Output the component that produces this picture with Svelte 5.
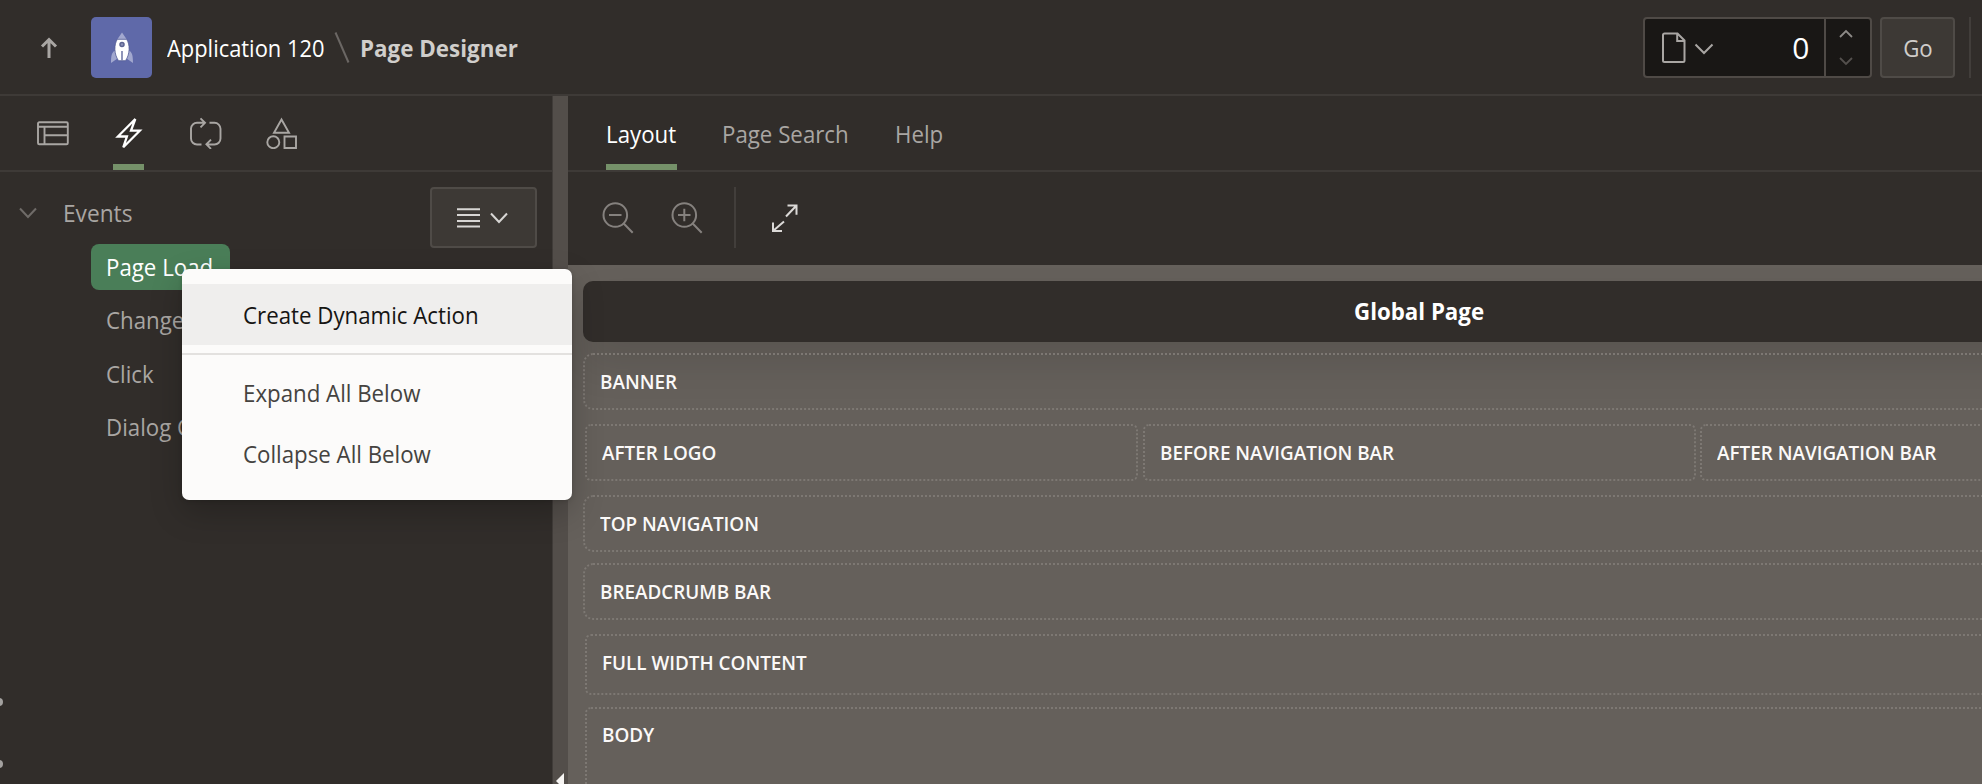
<script>
  const events = [
    { label: 'Page Load', selected: true },
    { label: 'Change' },
    { label: 'Click' },
    { label: 'Dialog Closed' }
  ];
  const tabs = [
    { label: 'Layout', active: true, w: 71 },
    { label: 'Page Search', w: 128 },
    { label: 'Help', w: 49 }
  ];
  const menu = [
    { label: 'Create Dynamic Action', hover: true, divider: true },
    { label: 'Expand All Below' },
    { label: 'Collapse All Below' }
  ];
</script>

<div class="app">
  <header class="top">
    <svg class="up" width="20" height="24" viewBox="0 0 20 24"><path d="M10 22V4M3 10.5 10 3.5l7 7" /></svg>
    <div class="tile">
      <svg width="24" height="32" viewBox="0 0 24 32">
        <path class="pale" d="M12 .5 7.2 7.5h9.6zM4.8 18.5C2 20.5 1 23 1 31l6.5-4.5zM19.2 18.5C22 20.5 23 23 23 31l-6.5-4.5z" />
        <path class="hull" d="M7.3 7.3h9.4C20 12.5 20.2 22 15.5 28.7h-7C3.8 22 4 12.5 7.3 7.3z" />
        <circle class="port" cx="12" cy="12.5" r="2" />
        <path class="slit" d="M12 19v10" />
      </svg>
    </div>
    <span class="crumb t">Application 120</span>
    <svg class="slash" width="17" height="34" viewBox="0 0 17 34"><path d="M1.5 1.5 14.5 31.5" /></svg>
    <span class="crumb current t">Page Designer</span>
    <div class="pagebox">
      <button class="kind" aria-label="Page">
        <svg width="24" height="32" viewBox="0 0 24 32"><path d="M2.5 1.5H15.5L22.5 8.5V28.5a1.5 1.5 0 0 1-1.5 1.5H2.5A1.5 1.5 0 0 1 1 28.5V3A1.5 1.5 0 0 1 2.5 1.5zM15.2 1.5V9h7.3" /></svg>
        <svg class="chev" width="20" height="12" viewBox="0 0 20 12"><path d="M1.5 1.5 10 10l8.5-8.5" /></svg>
      </button>
      <span class="num t">0</span>
      <div class="spin">
        <svg width="14" height="9" viewBox="0 0 14 9"><path d="M1 8 7 2l6 6" /></svg>
        <svg class="dim" width="14" height="9" viewBox="0 0 14 9"><path d="M1 1l6 6 6-6" /></svg>
      </div>
    </div>
    <button class="go"><span class="t">Go</span></button>
    <i class="rule"></i>
  </header>

  <div class="main">
    <aside class="left">
      <nav class="icons">
        <span class="itab"><svg viewBox="0 0 32 32"><path d="M2.3 5.2H29.5a1.3 1.3 0 0 1 1.3 1.3V26a1.3 1.3 0 0 1-1.3 1.3H2.3A1.3 1.3 0 0 1 1 26V6.500A1.3 1.3 0 0 1 2.3 5.2zM1 9.7H30.8M7.5 9.7V27.3M7.5 18.2H30.8" /></svg></span>
        <span class="itab on"><svg viewBox="0 0 32 32"><path d="M22.3 2 4.9 19.5h9L10.3 30.3 26.800 13.700H18z" /></svg></span>
        <span class="itab"><svg viewBox="0 0 32 32"><path d="M15 5.8H7A6 6 0 0 0 1 11.500V21.500a6 6 0 0 0 6 6h4.500M10.500 1.300 15 5.800 10.500 10.300M19.500 5.800H24.500a6 6 0 0 1 6 6V21.500a6 6 0 0 1-6 6H16.500M21 22.700l-4.600 4.600 4.600 4.600" /></svg></span>
        <span class="itab"><svg viewBox="0 0 32 32"><path d="M15.500 2.500 8 15.700H23zM18.500 19.500H30V31H18.500z" /><circle cx="7.300" cy="25.200" r="6" /></svg></span>
      </nav>
      <div class="tree">
        <div class="node root">
          <svg class="twist" width="20" height="12" viewBox="0 0 20 12"><path d="M2 1.5 10 10l8-8.5" /></svg>
          <span class="t">Events</span>
        </div>
        {#each events as e}
          <div class="node"><span class="pill" class:selected={e.selected}><span class="t">{e.label}</span></span></div>
        {/each}
        <button class="listbtn" aria-label="Menu">
          <svg width="24" height="20" viewBox="0 0 24 20"><path d="M0 1.3H23M0 7H23M0 12.9H23M0 18.6H23" /></svg>
          <svg width="20" height="12" viewBox="0 0 20 12"><path d="M2 1.5 10 10l8-8.5" /></svg>
        </button>
      </div>
      <i class="dot a"></i>
      <i class="dot b"></i>
    </aside>

    <div class="split"><svg width="8" height="16" viewBox="0 0 8 16"><path d="M8 0V16L0 8z" /></svg></div>

    <section class="right">
      <nav class="tabs">
        {#each tabs as t}
          <span class="tab" class:active={t.active} style="width:{t.w}px"><span class="t">{t.label}</span></span>
        {/each}
      </nav>
      <div class="tools">
        <svg class="zoom" width="32" height="32" viewBox="0 0 32 32"><circle cx="13.3" cy="13" r="11.8" /><path d="M21.7 21.5 30.7 30.7M7 13H19.5" /></svg>
        <svg class="zoom" width="32" height="32" viewBox="0 0 32 32"><circle cx="13.3" cy="13" r="11.8" /><path d="M21.7 21.5 30.7 30.7M7 13H19.5M13.3 6.7V19.3" /></svg>
        <i class="rule"></i>
        <svg class="expand" width="28" height="28" viewBox="0 0 28 28"><path d="M15 12.5 25.5 1.5M16.500 1.5H25.5V10.7M13 17.5 2 27M2 18.5V27h9" /></svg>
      </div>
      <div class="canvas">
        <div class="stage">
          <div class="title"><span class="t">Global Page</span></div>
          <div class="region"><b class="t">BANNER</b></div>
          <div class="trio">
            <div class="region in"><b class="t">AFTER LOGO</b></div>
            <div class="region in"><b class="t">BEFORE NAVIGATION BAR</b></div>
            <div class="region in"><b class="t">AFTER NAVIGATION BAR</b></div>
          </div>
          <div class="region nav"><b class="t">TOP NAVIGATION</b></div>
          <div class="region bread"><b class="t">BREADCRUMB BAR</b></div>
          <div class="region in full"><b class="t">FULL WIDTH CONTENT</b></div>
          <div class="region in body"><b class="t">BODY</b></div>
        </div>
      </div>
    </section>
  </div>

  <div class="menu">
    {#each menu as m}
      <div class="item" class:hover={m.hover}><span class="t">{m.label}</span></div>
      {#if m.divider}<hr />{/if}
    {/each}
  </div>
</div>

<style>
  :global(body) { background: #312d2a; overflow: hidden; }
  .app {
    position: relative; width: 1982px; height: 784px; overflow: hidden; box-sizing: border-box;
    display: flex; flex-direction: column;
    font-family: 'Open Sans', 'Noto Sans', sans-serif; font-size: 24px; font-weight: 450; line-height: 32px;
    color: #a9a6a3; background: #312d2a; white-space: nowrap;
  }
  .app :global(*) { box-sizing: border-box; }
  .t { display: inline-block; transform: scaleX(.928); transform-origin: 0 50%; }
  svg { display: block; flex: none; fill: none; stroke: currentColor; stroke-width: 2; }
  button { font: inherit; color: inherit; margin: 0; padding: 0; }

  .top { height: 96px; flex: none; display: flex; align-items: center; padding: 1px 0 0 39px; border-bottom: 2px solid #3e3a37; }
  .up { stroke-width: 3; }
  .tile { width: 61px; height: 61px; margin-left: 32px; border-radius: 5px; background: #5f69a9; display: flex; align-items: center; justify-content: center; }
  .tile svg { stroke: none; }
  .pale { fill: #a2a8cf; }
  .hull { fill: #fff; stroke: #535c94; stroke-width: .8; }
  .port { fill: #8c92b8; stroke: #5c6391; stroke-width: 1.5; }
  .slit { stroke: #7c83ad; stroke-width: 1.7; }
  .crumb { color: #fff; width: 158px; margin-left: 15px; transform: scaleX(.912); }
  .slash { margin-left: 9px; color: #6b6764; }
  .current { color: #d0cecb; font-weight: 700; margin-left: 9px; width: 170px; transform: scaleX(.933); }
  .pagebox { margin-left: auto; width: 229px; height: 61px; border: 2px solid #4f4a46; border-radius: 4px; background: #191715; display: flex; align-items: center; }
  .kind { background: none; border: 0; display: flex; align-items: center; padding-left: 17px; }
  .chev { margin: 2px 0 0 8px; }
  .num { margin-left: auto; margin-right: 15px; font-size: 28.5px; color: #fff; transform-origin: 100% 50%; transform: scaleX(1.05); }
  .spin { width: 46px; height: 100%; border-left: 2px solid #4f4a46; display: flex; flex-direction: column; align-items: center; justify-content: space-between; padding: 10px 5px 10px 0; }
  .spin svg { stroke-width: 1.8; color: #8d8a87; }
  .spin .dim { color: #54504d; }
  .go { margin-left: 8px; width: 75px; height: 61px; border: 2px solid #4f4b47; border-radius: 4px; background: #3d3935; color: #d0cdca; }
  .go .t { transform-origin: 50% 50%; }
  .rule { width: 2px; height: 61px; background: #423e3b; flex: none; }
  .top > .rule { margin: 0 11px 0 14px; }

  .main { flex: 1; display: flex; min-height: 0; }
  .left { width: 552px; flex: none; position: relative; overflow: hidden; }
  .icons { height: 76px; padding-left: 32px; display: flex; gap: 36px; border-bottom: 2px solid #3e3a37; }
  .itab { width: 41px; margin-right: -1px; height: 74px; position: relative; display: flex; justify-content: flex-end; padding: 21px 4px 0 0; }
  .itab:nth-child(n + 3) { padding-right: 3px; }
  .itab svg { width: 32px; height: 32px; stroke-width: 1.9; }
  .itab.on { color: #fff; }
  .itab.on svg { stroke-width: 2.3; }
  .itab.on::after { content: ''; position: absolute; left: 5px; right: 5px; bottom: 0; height: 6px; background: #759169; }
  .tree { position: relative; padding-top: 14.7px; }
  .node { height: 53.4px; display: flex; align-items: center; padding-left: 91px; }
  .root { padding-left: 18px; }
  .twist { color: #6f6b68; }
  .root .t { margin-left: 25px; transform: scaleX(.945); }
  .pill { height: 46px; padding: 0 15px 0 14.5px; border-radius: 8px; display: flex; align-items: center; }
  .selected { background: #4a7e58; color: #fff; width: 139px; }
  .listbtn { position: absolute; left: 430px; top: 15px; width: 107px; height: 61px; border: 2px solid #4f4b47; border-radius: 4px; background: #3d3935; color: #d8d6d4; display: flex; align-items: center; padding-left: 25px; gap: 8px; }
  .dot { position: absolute; left: -5px; width: 8px; height: 8px; border-radius: 50%; background: #a3a19f; }
  .a { top: 602px; }
  .b { top: 664px; }

  .split { width: 16px; flex: none; background: #534e4a; border-left: 1px solid #403c39; overflow: hidden; display: flex; flex-direction: column; padding: 677px 0 0 3px; }
  .split svg { fill: #f7f5f3; stroke: none; }

  .right { flex: 1; min-width: 0; display: flex; flex-direction: column; }
  .tabs { height: 76px; flex: none; padding-left: 38px; display: flex; gap: 45px; border-bottom: 2px solid #3e3a37; }
  .tab { position: relative; height: 74px; display: flex; align-items: center; padding-top: 1px; }
  .active { color: #fff; }
  .active::after { content: ''; position: absolute; left: 0; right: 0; bottom: 0; height: 6px; background: #759169; }
  .tools { height: 93px; flex: none; display: flex; align-items: flex-start; padding: 15px 0 0 34px; }
  .zoom { color: #85817e; margin: 14.500px 36.5px 0 0; }
  .tools .rule { margin: 0 35px 0 -5px; }
  .expand { color: #dbd9d7; margin-top: 16.5px; }

  .canvas { flex: 1; min-height: 0; overflow: hidden; background: #65605b; padding: 16px 0 0 15px; }
  .stage { width: 1672px; display: flex; flex-direction: column; }
  .title { height: 61px; border-radius: 10px; background: #312d2a; color: #fff; font-weight: 700; display: flex; align-items: center; justify-content: center; box-shadow: 0 22px 40px rgba(0, 0, 0, .11); margin-bottom: 11px; padding-bottom: 1.5px; }
  .title .t { transform-origin: 50% 50%; }
  .region { position: relative; height: 57px; border: 2px dotted #7d7873; border-radius: 10px; display: flex; align-items: center; padding-left: 15px; color: #fbf9f8; font-size: 20px; }
  .region b { font-weight: 650; transform: scaleX(.943); }
  .in { border-radius: 6px; margin-left: 2px; }
  .trio { display: flex; gap: 2.5px; margin: 14px 0; }
  .trio .region { width: 553px; flex: none; }
  .bread { margin: 11px 0 14px; }
  .full { height: 61px; padding-bottom: 3px; margin-bottom: 11.5px; }
  .body { height: 200px; align-items: flex-start; padding-top: 10.5px; }

  .menu { position: absolute; left: 182px; top: 269px; width: 390px; height: 231px; padding-top: 15px; border-radius: 7px; background: #fcfbfa; color: #454340; box-shadow: 0 12px 32px rgba(0, 0, 0, .22), 0 1px 4px rgba(0, 0, 0, .15); }
  .item { height: 61px; display: flex; align-items: center; padding-left: 60.5px; }
  .hover { background: #efeeed; color: #161513; }
  hr { margin: 8px 0 7.5px; border: 0; height: 2px; background: #e3e1df; }
</style>
